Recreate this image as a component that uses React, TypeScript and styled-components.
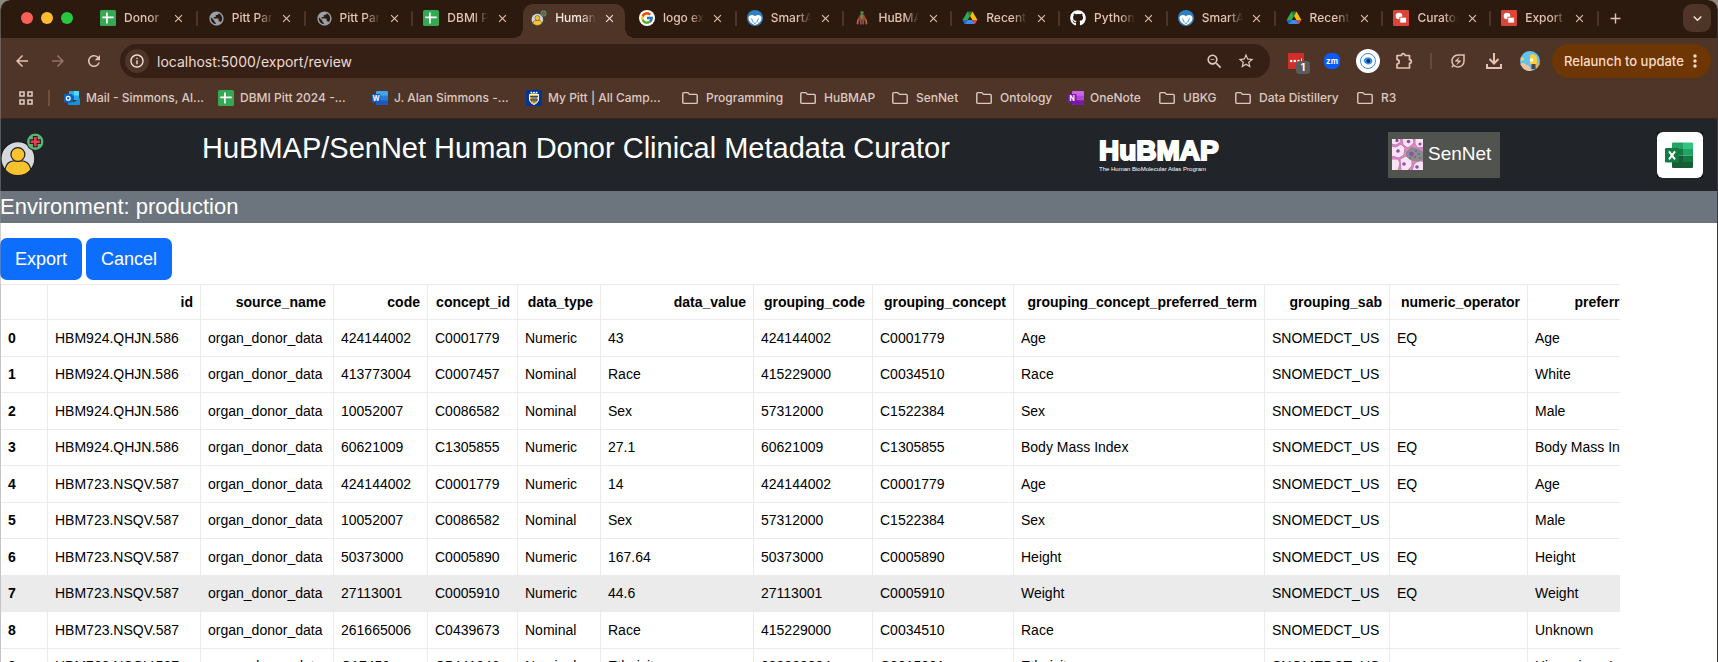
import React from "react";
import styled, { createGlobalStyle, css } from "styled-components";
import {
  MdAdd,
  MdArrowBack,
  MdArrowForward,
  MdClose,
  MdExpandMore,
  MdInfoOutline,
  MdMoreVert,
  MdOutlineEnergySavingsLeaf,
  MdPublic,
  MdRefresh,
  MdStarOutline,
  MdZoomOut,
} from "react-icons/md";
import { FaGithub } from "react-icons/fa";
import { FcGoogle } from "react-icons/fc";

const color = {
  strip: "#2d1a0f",
  bar: "#4f3428",
  field: "#362015",
  tabText: "#e3c4b2",
  barText: "#dccac1",
  bright: "#f6e6dd",
  divider: "#65493b",
  relaunch: "#6e3505",
  navbar: "#212529",
  env: "#6c757d",
  primary: "#0d6efd",
  line: "#e9ebee",
  hover: "#ebebeb",
};

const uiFont = `Inter, Roboto, sans-serif`;
const pageFont = `"Liberation Sans", Arial, sans-serif`;

const GlobalStyle = createGlobalStyle`
  *, *::before, *::after { box-sizing: border-box; }
  html { background: #8d8782; overflow: hidden; }
  body { margin: 0; font-family: ${pageFont}; }
  button { border: 0; padding: 0; background: none; color: inherit; font: inherit; cursor: pointer; }
  svg { display: block; flex: none; }
`;

/* ---------- window ---------- */

const Window = styled.div`
  position: relative;
  height: 100vh;
  overflow: hidden;
  display: flex;
  flex-direction: column;
  border-radius: 10px 10px 0 0;
  background: #fff;

  &::after {
    content: "";
    position: absolute;
    inset: 0;
    border-radius: inherit;
    border-left: 1px solid rgba(150, 150, 150, 0.45);
    border-right: 1px solid #3c3a38;
    pointer-events: none;
  }
`;

/* ---------- tab strip ---------- */

const TabStrip = styled.header`
  flex: none;
  display: flex;
  height: 38px;
  background: ${color.strip};
  font-family: ${uiFont};
`;

const Lights = styled.div`
  display: flex;
  align-items: center;
  gap: 8px;
  width: 89px;
  padding: 0 0 2px 21px;
`;

const Light = styled.span<{ $fill: string }>`
  width: 12px;
  height: 12px;
  border-radius: 50%;
  background: ${(p) => p.$fill};
`;

const Tabs = styled.nav`
  flex: 1;
  display: flex;
  min-width: 0;
`;

const Tab = styled.div<{ $active?: boolean; $divider?: boolean }>`
  position: relative;
  flex: 1 1 0;
  min-width: 0;
  display: flex;
  align-items: center;
  padding: 0 10px 2px 11px;
  color: ${(p) => (p.$active ? color.bright : color.tabText)};
  font-size: 12px;
  font-weight: 500;

  ${(p) =>
    p.$divider &&
    css`
      &::after {
        content: "";
        position: absolute;
        right: -1px;
        top: 11px;
        width: 2px;
        height: 15px;
        border-radius: 1px;
        background: ${color.bar};
      }
    `}
`;

const ActiveShape = styled.span`
  position: absolute;
  inset: 4px 3px 0;
  border-radius: 10px 10px 0 0;
  background: ${color.bar};

  &::before,
  &::after {
    content: "";
    position: absolute;
    bottom: 0;
    width: 10px;
    height: 10px;
  }
  &::before {
    right: 100%;
    background: radial-gradient(circle at 0 0, transparent 10px, ${color.bar} 10px);
  }
  &::after {
    left: 100%;
    background: radial-gradient(circle at 100% 0, transparent 10px, ${color.bar} 10px);
  }
`;

const TabIcon = styled.span`
  position: relative;
  flex: none;
  width: 16px;
  height: 16px;
  margin-right: 8px;
`;

const TabTitle = styled.a`
  position: relative;
  flex: 1;
  min-width: 0;
  margin-right: 6px;
  overflow: hidden;
  white-space: nowrap;
  color: inherit;
  text-decoration: none;
  line-height: 16px;
  mask-image: linear-gradient(to right, #000 65%, transparent);
`;

const TabClose = styled.button`
  position: relative;
  flex: none;
  display: grid;
  place-items: center;
  width: 16px;
  height: 16px;
`;

const StripEnd = styled.div`
  flex: none;
  display: flex;
  justify-content: space-between;
  width: 120px;
  padding: 4px 7px 0;
  color: ${color.tabText};
`;

const NewTab = styled.button`
  display: grid;
  place-items: center;
  width: 20px;
  height: 28px;
`;

const TabSearch = styled.button`
  display: grid;
  place-items: center;
  width: 28px;
  height: 28px;
  border-radius: 9px;
  background: ${color.bar};
  color: ${color.bright};
`;

/* ---------- toolbar ---------- */

const Toolbar = styled.div`
  flex: none;
  display: flex;
  align-items: center;
  height: 46px;
  padding: 0 7px 0 4px;
  background: ${color.bar};
  color: ${color.tabText};
  font-family: ${uiFont};
`;

const ToolButton = styled.button<{ $dim?: boolean }>`
  flex: none;
  display: grid;
  place-items: center;
  width: 36px;
  height: 34px;
  opacity: ${(p) => (p.$dim ? 0.45 : 1)};
`;

const Omnibox = styled.form`
  flex: 1;
  display: flex;
  align-items: center;
  height: 34px;
  margin: 0 8px;
  padding: 0 8px 0 5px;
  border-radius: 17px;
  background: ${color.field};
  color: ${color.barText};
`;

const SiteInfo = styled.button`
  display: grid;
  place-items: center;
  width: 24px;
  height: 24px;
  margin-right: 8px;
  border-radius: 50%;
  background: ${color.bar};
  color: ${color.bright};
`;

const Address = styled.input`
  flex: 1;
  min-width: 0;
  padding: 0;
  border: 0;
  outline: 0;
  background: none;
  color: #ecdcd3;
  font-family: ${uiFont};
  font-size: 14px;
`;

const OmniButton = styled.button`
  display: grid;
  place-items: center;
  width: 32px;
  height: 32px;
`;

const ToolDivider = styled.span`
  flex: none;
  width: 2px;
  height: 16px;
  margin: 0 8px;
  background: ${color.divider};
`;

const Relaunch = styled.button`
  flex: none;
  display: flex;
  align-items: center;
  justify-content: space-between;
  width: 159px;
  height: 34px;
  margin-left: 4px;
  padding: 0 6px 0 12px;
  border-radius: 17px;
  background: ${color.relaunch};
  color: #fadcc4;
  font-size: 13px;
  font-weight: 500;
  white-space: nowrap;
`;

/* ---------- bookmarks ---------- */

const Bookmarks = styled.nav`
  flex: none;
  display: flex;
  align-items: center;
  height: 35px;
  padding: 0 0 7px 18px;
  background: ${color.bar};
  border-bottom: 1px solid #35271f;
  color: ${color.barText};
  font-family: ${uiFont};
  font-size: 12px;
  font-weight: 500;
`;

const BookmarkDivider = styled.span`
  width: 2px;
  height: 16px;
  margin: 0 14px 0 14px;
  background: #71503a;
`;

const Bookmark = styled.a<{ $width: number; $folder?: boolean }>`
  flex: none;
  display: flex;
  align-items: center;
  gap: ${(p) => (p.$folder ? 8 : 6)}px;
  width: ${(p) => p.$width}px;
  line-height: 16px;
  color: inherit;
  text-decoration: none;
  white-space: nowrap;
`;

/* ---------- page ---------- */

const Navbar = styled.header`
  flex: none;
  display: grid;
  grid-template-columns: 202px 1fr 289px 269px 61px;
  align-items: start;
  height: 72px;
  padding-top: 13px;
  background: ${color.navbar};
  color: #fff;
`;

const Title = styled.h1`
  margin: 0;
  font-size: 29px;
  font-weight: 400;
  line-height: 32px;
  white-space: nowrap;
`;

const HubmapLogo = styled.a`
  display: flex;
  flex-direction: column;
  padding-top: 5px;
  color: #fff;
  text-decoration: none;
  white-space: nowrap;
`;

const HubmapName = styled.span`
  font-size: 28px;
  font-weight: 700;
  line-height: 28px;
  -webkit-text-stroke: 2px #fff;
`;

const HubmapTag = styled.span`
  font-size: 6px;
  line-height: 8px;
`;

const SennetLogo = styled.a`
  display: flex;
  align-items: center;
  gap: 5px;
  width: 112px;
  height: 46px;
  padding: 0 0 2px 4px;
  background: #50534e;
  color: #fff;
  font-size: 19px;
  text-decoration: none;
`;

const EnvBar = styled.p`
  flex: none;
  margin: 0;
  background: ${color.env};
  color: #fff;
  font-size: 22px;
  line-height: 32px;
`;

const Actions = styled.div`
  flex: none;
  display: flex;
  gap: 4px;
  padding: 15px 0 4px;
`;

const ActionButton = styled.button`
  height: 42px;
  padding: 0 15px;
  border-radius: 7px;
  background: ${color.primary};
  color: #fff;
  font-size: 18px;
`;

const TableArea = styled.main`
  flex: 1;
  min-height: 0;
  margin-right: 98px;
  overflow: hidden;
`;

/* The eleven rows share the table height evenly. */
const DataTable = styled.table`
  width: 1681px;
  height: 401px;
  table-layout: fixed;
  border-collapse: collapse;
  color: #000;
  font-size: 14px;
  line-height: 20px;
  white-space: nowrap;

  th,
  td {
    padding: 7px;
    border: 1px solid ${color.line};
    text-align: left;
  }
  thead th {
    text-align: right;
  }
`;

const Row = styled.tr<{ $hovered?: boolean }>`
  background: ${(p) => (p.$hovered ? color.hover : "transparent")};
`;

/* ---------- drawings ---------- */

const SheetsIcon = () => (
  <svg width="16" height="16" viewBox="0 0 16 16">
    <rect width="16" height="16" rx="1.5" fill="#34a853" />
    <path d="M6.9 2.5v11M2.3 7.3h11.4" stroke="#fff" strokeWidth="1.7" />
  </svg>
);

const GlobeIcon = () => <MdPublic size={17} color="#9aa0a8" />;

const DonorIcon = ({ size }: { size: number }) => (
  <svg width={size} height={size} viewBox="0 0 44 44">
    <circle cx="17.5" cy="26" r="16.5" fill="#d5d8dc" stroke="#15181b" strokeWidth="1" />
    <path d="M5 37c1-8 6-9 12.500-9s11.500 1 12.500 9a16.500 16.500 0 0 1-25 0z" fill="#f9c22f" stroke="#222" strokeWidth="1.200" />
    <circle cx="17.500" cy="22" r="6.800" fill="#f9c22f" stroke="#222" strokeWidth="1.200" />
    <circle cx="34.500" cy="9.500" r="8.500" fill="#5cb377" stroke="#222" strokeWidth="1" />
    <path d="M32.700 4.500h3.600v3.200h3.200v3.600h-3.200v3.200h-3.600v-3.200h-3.200V7.700h3.200z" fill="#f0384f" stroke="#222" strokeWidth="1" />
  </svg>
);

const GoogleIcon = () => (
  <svg width="16" height="16" viewBox="0 0 16 16">
    <circle cx="8" cy="8" r="8" fill="#fff" />
    <FcGoogle x="1" y="1" size={14} />
  </svg>
);

const SmartIcon = () => (
  <svg width="16" height="16" viewBox="0 0 16 16">
    <circle cx="8" cy="8" r="8" fill="#2f80c3" />
    <path d="M1.500 7.500C2 5 5.500 4.200 8 6.300c2.500-2.100 6-1.300 6.500 1.200.3 2.600-1.200 4.900-3.600 6.200L8 15.300l-2.900-1.600C2.700 12.400 1.200 10.100 1.500 7.500z" fill="#fff" />
    <path d="M4.600 8.400c.2 1.600 1.300 2 1.600 4.200M11.400 8.400c-.2 1.600-1.300 2-1.600 4.200" stroke="#2f80c3" strokeWidth=".9" fill="none" />
    <path d="M6.900 12.800h2.200L8 14.600z" fill="#2f80c3" />
  </svg>
);

const HubmapIcon = () => (
  <svg width="16" height="16" viewBox="0 0 16 16">
    <circle cx="8" cy="2.600" r="1.700" fill="#3f8d54" />
    <path d="M6 4.500h4l2 4 1 6h-1.500L10 8.500v6H8.500V10h-1v4.500H6v-6L4.500 14.500H3l1-6z" fill="#a6432c" />
    <path d="M6.500 4.500h3v4h-3z" fill="#4a7f56" />
    <path d="M4 9l-1 5M12 9l1 5M8 4v5" stroke="#c8843c" strokeWidth=".8" />
    <path d="M7 10v4M9 10v4" stroke="#4a6fa0" strokeWidth=".8" />
  </svg>
);

const DriveIcon = () => (
  <svg width="16" height="16" viewBox="0 0 16 16">
    <path d="M5.500 1.500h5L8 5.900z" fill="#188038" />
    <path d="M5.500 1.500 8 5.900 3.600 13.800 2.800 14 .6 10.100z" fill="#34a853" />
    <path d="M10.500 1.500 8 5.900l2.400 4.200h5z" fill="#fbbc04" />
    <path d="M5.600 10.100h4.800l2.600 3.900H3z" fill="#4285f4" />
    <path d="M10.400 10.100h5L13 14.100z" fill="#ea4335" />
    <path d="M.6 10.100h5L3 14.100z" fill="#1967d2" />
  </svg>
);

const ShapesIcon = () => (
  <svg width="16" height="16" viewBox="0 0 16 16">
    <rect width="16" height="16" rx="1" fill="#db4437" />
    <circle cx="6" cy="6" r="3.300" fill="#fff" />
    <rect x="6.800" y="7.200" width="6.600" height="5.800" fill="#fff" stroke="#db4437" strokeWidth=".8" />
  </svg>
);

const AppsIcon = () => (
  <svg width="16" height="16" viewBox="0 0 16 16" fill="none" stroke="currentColor" strokeWidth="1.600">
    <path d="M2 2h4v4H2zM10 2h4v4h-4zM2 10h4v4H2zM10 10h4v4h-4z" />
  </svg>
);

const FolderIcon = () => (
  <svg width="16" height="16" viewBox="0 0 16 16" fill="none" stroke="currentColor" strokeWidth="1.400">
    <path d="M.8 3.600c0-.6.4-1 1-1h4l1.700 1.800h6.700c.6 0 1 .4 1 1v7c0 .6-.4 1-1 1H1.800c-.6 0-1-.4-1-1z" />
  </svg>
);

type LetterIconProps = { letter: string; back: string; mid: string; front: string };

const LetterIcon = ({ letter, back, mid, front }: LetterIconProps) => (
  <svg width="16" height="16" viewBox="0 0 16 16">
    <rect x="4" y="1" width="12" height="14" rx="1" fill={back} />
    <path d="M4 5.700h12v4.600H4z" fill={mid} />
    <path d="M4 10.300h12V14q0 1-1 1H5q-1 0-1-1z" fill={front} />
    <rect y="4" width="8.500" height="8.500" rx="1" fill={front} />
    <text x="4.250" y="10.700" fontSize="7" fontWeight="700" fontFamily="Inter, sans-serif" fill="#fff" textAnchor="middle">
      {letter}
    </text>
  </svg>
);

const OutlookIcon = () => (
  <svg width="16" height="16" viewBox="0 0 16 16">
    <rect x="5" y="1" width="10" height="9" rx="1" fill="#28a8ea" />
    <path d="M10 1h5v4.500h-5z" fill="#50d9ff" />
    <path d="M5 5.500h5V10H5z" fill="#0364b8" />
    <path d="M4 9l6 3.200L16 8v6q0 1-1 1H5q-1 0-1-1z" fill="#1490df" />
    <rect y="4" width="8.500" height="8.500" rx="1" fill="#0f5fbd" />
    <circle cx="4.250" cy="8.200" r="1.900" fill="none" stroke="#fff" strokeWidth="1.300" />
  </svg>
);

const PittIcon = () => (
  <svg width="16" height="16" viewBox="0 0 16 16">
    <rect width="16" height="16" fill="#003594" />
    <path d="M3.500 4.500h9V9c0 3-2.300 4.500-4.500 5.500C5.800 13.500 3.500 12 3.500 9z" fill="#ffb81c" stroke="#fff" strokeWidth="1" />
    <path d="M4 6.500h8M4 10h8M6 6.500V12M8 6.500V13M10 6.500V12" stroke="#003594" strokeWidth=".8" />
    <path d="M4.500 3.500V1.700h1.500v1h1.200v-1h1.600v1H10v-1h1.500v1.800z" fill="#fff" />
  </svg>
);

const PasswordIcon = () => (
  <svg width="28" height="26" viewBox="0 0 28 26">
    <rect x="6" y="5" width="16" height="16" rx="1" fill="#d32d27" />
    <circle cx="9.200" cy="13" r="1.300" fill="#fff" />
    <circle cx="12.800" cy="13" r="1.300" fill="#fff" />
    <circle cx="16.400" cy="13" r="1.300" fill="#fff" />
    <path d="M19.500 10.500v5" stroke="#fff" />
    <rect x="14" y="13" width="14" height="13" rx="3.500" fill="#5b5b5b" />
    <text x="21" y="23" fontSize="10" fontWeight="700" fontFamily="Inter, sans-serif" fill="#fff" textAnchor="middle">
      1
    </text>
  </svg>
);

const ZoomAppIcon = () => (
  <svg width="16" height="16" viewBox="0 0 16 16">
    <rect width="16" height="16" rx="6.500" fill="#0b5cff" />
    <text x="8" y="10.600" fontSize="8" fontWeight="700" fontFamily="Inter, sans-serif" fill="#fff" textAnchor="middle">
      zm
    </text>
  </svg>
);

const EyeIcon = () => (
  <svg width="26" height="26" viewBox="0 0 26 26">
    <circle cx="13" cy="13" r="12" fill="#fff" />
    <circle cx="13" cy="13" r="7.500" fill="none" stroke="#3d8ee0" strokeWidth="1" />
    <path d="M8.500 12.500c1.500-4 7.500-4.500 9 0 0 4.500-7 6-9 0z" fill="#3a92ea" />
    <circle cx="13.300" cy="13" r="2" fill="#12325e" />
  </svg>
);

const PuzzleIcon = () => (
  <svg width="20" height="20" viewBox="0 0 20 20" fill="none" stroke="currentColor" strokeWidth="1.700" strokeLinejoin="round">
    <path d="M3 4.500h4.500a1.800 1.800 0 0 1 3.600 0h4.400v4.200a1.800 1.800 0 0 1 0 3.600v4.700H3v-4a2.200 2.200 0 0 0 0-4.400z" />
  </svg>
);

const DownloadIcon = () => (
  <svg width="18" height="18" viewBox="0 0 18 18" fill="none" stroke="currentColor" strokeWidth="2">
    <path d="M9 1v10M4.500 7 9 11.500 13.500 7M2 12v4h14v-4" />
  </svg>
);

const AvatarIcon = () => (
  <svg width="20" height="20" viewBox="0 0 20 20">
    <defs>
      <clipPath id="avatar-clip">
        <circle cx="10" cy="10" r="10" />
      </clipPath>
    </defs>
    <g clipPath="url(#avatar-clip)">
      <rect width="20" height="20" fill="#62c3ef" />
      <path d="M0 13c3-3 6 1 9 2l3 5H0z" fill="#f3c49b" />
      <path d="M10 4c3-2 7 0 7 4v6l-5 1-2-3z" fill="#fbd03b" />
      <path d="M0 6l4 1v2L1 10z" fill="#fbd03b" />
      <circle cx="11.500" cy="9" r="1.800" fill="#fff" />
      <path d="M11.500 13h4v5h-4z" fill="#54453b" />
      <path d="M16 12h4v8h-4z" fill="#d8b36a" />
    </g>
  </svg>
);

const CellsPicture = () => (
  <svg width="31" height="31" viewBox="0 0 31 31">
    <rect width="31" height="31" fill="#d98ac5" />
    <g fill="#f7e3f1" stroke="#c678b4" strokeWidth="1">
      <path d="M-1-2 8-1 9 3 4 6-1 5zM10-1h11l1 5-6 5-5-3zM23-1h9v9l-6 1-3-4zM-1 7l5 1 5-3 4 4-1 7-5 3-8-2zM-1 20l7 0 2 4-2 8h-7zM8 20l6-3 6 4 0 6-5 5H9zM22 25l5-4 5 2v9H20z" />
    </g>
    <path d="M14 13l5-5 8 2 5 3v8l-6 2-8-2-4-4z" fill="#8c8a8e" />
    <g fill="#8a4fa8">
      <circle cx="5" cy="1.500" r="1.700" />
      <circle cx="16.500" cy="2.500" r="1.800" />
      <circle cx="28" cy="5" r="1.600" />
      <circle cx="6" cy="12" r="1.800" />
      <circle cx="19.500" cy="15" r="2.200" />
      <circle cx="12" cy="25" r="1.800" />
      <circle cx="25" cy="28" r="1.800" />
    </g>
    <g fill="#4c4a50">
      <circle cx="24" cy="12" r=".7" />
      <circle cx="27" cy="15" r=".7" />
      <circle cx="23" cy="18" r=".7" />
      <circle cx="28" cy="19" r=".7" />
      <circle cx="18" cy="19" r=".7" />
    </g>
  </svg>
);

const ExcelPicture = () => (
  <svg width="46" height="46" viewBox="0 0 46 46">
    <rect width="46" height="46" fill="#0c0e10" />
    <rect width="46" height="46" rx="6" fill="#fff" />
    <path d="M16 10.500h10V17H15v-5.500q0-1 1-1z" fill="#21a366" />
    <path d="M26 10.500h9q1 0 1 1V17H26z" fill="#33c481" />
    <path d="M15 17h11v6.500H15z" fill="#107c41" />
    <path d="M26 17h10v6.500H26z" fill="#21a366" />
    <path d="M15 23.500h11V30H15z" fill="#185c37" />
    <path d="M26 23.500h10V30H26z" fill="#107c41" />
    <path d="M15 30h21v5q0 1-1 1H16q-1 0-1-1z" fill="#185c37" />
    <rect x="8" y="16" width="14" height="14.500" rx="1.300" fill="#107c41" />
    <path d="M12 19.300l6 8M18 19.300l-6 8" stroke="#fff" strokeWidth="2" />
  </svg>
);

/* ---------- data ---------- */

type TabInfo = { title: string; icon: React.ReactNode; active?: boolean; divider?: boolean };

const tabs: TabInfo[] = [
  { title: "Donor", icon: <SheetsIcon />, divider: true },
  { title: "Pitt Pan", icon: <GlobeIcon />, divider: true },
  { title: "Pitt Pan", icon: <GlobeIcon />, divider: true },
  { title: "DBMI Pitt", icon: <SheetsIcon /> },
  { title: "Human", icon: <DonorIcon size={16} />, active: true },
  { title: "logo exp", icon: <GoogleIcon />, divider: true },
  { title: "SmartAPI", icon: <SmartIcon />, divider: true },
  { title: "HuBMAP", icon: <HubmapIcon />, divider: true },
  { title: "Recent", icon: <DriveIcon />, divider: true },
  { title: "Python", icon: <FaGithub size={16} color="#fff" />, divider: true },
  { title: "SmartAPI", icon: <SmartIcon />, divider: true },
  { title: "Recent", icon: <DriveIcon />, divider: true },
  { title: "Curator", icon: <ShapesIcon />, divider: true },
  { title: "Export", icon: <ShapesIcon />, divider: true },
];

type BookmarkInfo = { label: string; width: number; icon?: React.ReactNode };

const bookmarks: BookmarkInfo[] = [
  { label: "Mail - Simmons, Al...", width: 154, icon: <OutlookIcon /> },
  { label: "DBMI Pitt 2024 -...", width: 154, icon: <SheetsIcon /> },
  { label: "J. Alan Simmons -...", width: 154, icon: <LetterIcon letter="W" back="#41a5ee" mid="#2b7cd3" front="#185abd" /> },
  { label: "My Pitt | All Camp...", width: 156, icon: <PittIcon /> },
  { label: "Programming", width: 118 },
  { label: "HuBMAP", width: 92 },
  { label: "SenNet", width: 84 },
  { label: "Ontology", width: 92 },
  { label: "OneNote", width: 91, icon: <LetterIcon letter="N" back="#ca64ea" mid="#ae4bd5" front="#7719aa" /> },
  { label: "UBKG", width: 76 },
  { label: "Data Distillery", width: 122 },
  { label: "R3", width: 60 },
];

const columns: [string, number][] = [
  ["", 47],
  ["id", 153],
  ["source_name", 133],
  ["code", 94],
  ["concept_id", 90],
  ["data_type", 83],
  ["data_value", 153],
  ["grouping_code", 119],
  ["grouping_concept", 141],
  ["grouping_concept_preferred_term", 251],
  ["grouping_sab", 125],
  ["numeric_operator", 138],
  ["preferred_term", 154],
];

const source = "organ_donor_data";
const sab = "SNOMEDCT_US";

const rows: string[][] = [
  ["HBM924.QHJN.586", source, "424144002", "C0001779", "Numeric", "43", "424144002", "C0001779", "Age", sab, "EQ", "Age"],
  ["HBM924.QHJN.586", source, "413773004", "C0007457", "Nominal", "Race", "415229000", "C0034510", "Race", sab, "", "White"],
  ["HBM924.QHJN.586", source, "10052007", "C0086582", "Nominal", "Sex", "57312000", "C1522384", "Sex", sab, "", "Male"],
  ["HBM924.QHJN.586", source, "60621009", "C1305855", "Numeric", "27.1", "60621009", "C1305855", "Body Mass Index", sab, "EQ", "Body Mass Index"],
  ["HBM723.NSQV.587", source, "424144002", "C0001779", "Numeric", "14", "424144002", "C0001779", "Age", sab, "EQ", "Age"],
  ["HBM723.NSQV.587", source, "10052007", "C0086582", "Nominal", "Sex", "57312000", "C1522384", "Sex", sab, "", "Male"],
  ["HBM723.NSQV.587", source, "50373000", "C0005890", "Numeric", "167.64", "50373000", "C0005890", "Height", sab, "EQ", "Height"],
  ["HBM723.NSQV.587", source, "27113001", "C0005910", "Numeric", "44.6", "27113001", "C0005910", "Weight", sab, "EQ", "Weight"],
  ["HBM723.NSQV.587", source, "261665006", "C0439673", "Nominal", "Race", "415229000", "C0034510", "Race", sab, "", "Unknown"],
  ["HBM723.NSQV.587", source, "C17459", "C5441846", "Nominal", "Ethnicity", "398229004", "C0015031", "Ethnicity", sab, "", "Hispanic or Latino"],
];

const hoveredRow = 7;

/* ---------- app ---------- */

export default function App() {
  return (
    <Window>
      <GlobalStyle />
      <TabStrip>
        <Lights>
          <Light $fill="#ff5f57" />
          <Light $fill="#febc2e" />
          <Light $fill="#28c840" />
        </Lights>
        <Tabs aria-label="Tabs">
          {tabs.map((tab, i) => (
            <Tab key={i} $active={tab.active} $divider={tab.divider}>
              {tab.active && <ActiveShape />}
              <TabIcon>{tab.icon}</TabIcon>
              <TabTitle href="#">{tab.title}</TabTitle>
              <TabClose aria-label={`Close ${tab.title}`}>
                <MdClose size={13} />
              </TabClose>
            </Tab>
          ))}
        </Tabs>
        <StripEnd>
          <NewTab aria-label="New tab">
            <MdAdd size={17} />
          </NewTab>
          <TabSearch aria-label="Search tabs">
            <MdExpandMore size={17} />
          </TabSearch>
        </StripEnd>
      </TabStrip>

      <Toolbar>
        <ToolButton aria-label="Back">
          <MdArrowBack size={18} />
        </ToolButton>
        <ToolButton aria-label="Forward" $dim>
          <MdArrowForward size={18} />
        </ToolButton>
        <ToolButton aria-label="Reload">
          <MdRefresh size={18} />
        </ToolButton>
        <Omnibox onSubmit={(e) => e.preventDefault()}>
          <SiteInfo type="button" aria-label="Site information">
            <MdInfoOutline size={16} />
          </SiteInfo>
          <Address aria-label="Address" defaultValue="localhost:5000/export/review" />
          <OmniButton type="button" aria-label="Zoom">
            <MdZoomOut size={19} />
          </OmniButton>
          <OmniButton type="button" aria-label="Bookmark this page">
            <MdStarOutline size={18} />
          </OmniButton>
        </Omnibox>
        <ToolButton aria-label="Password manager">
          <PasswordIcon />
        </ToolButton>
        <ToolButton aria-label="Zoom meetings">
          <ZoomAppIcon />
        </ToolButton>
        <ToolButton aria-label="Viewer extension">
          <EyeIcon />
        </ToolButton>
        <ToolButton aria-label="Extensions">
          <PuzzleIcon />
        </ToolButton>
        <ToolDivider />
        <ToolButton aria-label="Energy saver">
          <MdOutlineEnergySavingsLeaf size={18} />
        </ToolButton>
        <ToolButton aria-label="Downloads">
          <DownloadIcon />
        </ToolButton>
        <ToolButton aria-label="Profile">
          <AvatarIcon />
        </ToolButton>
        <Relaunch>
          Relaunch to update
          <MdMoreVert size={20} />
        </Relaunch>
      </Toolbar>

      <Bookmarks aria-label="Bookmarks">
        <AppsIcon />
        <BookmarkDivider />
        {bookmarks.map((b) => (
          <Bookmark key={b.label} href="#" $width={b.width} $folder={!b.icon}>
            {b.icon ?? <FolderIcon />}
            {b.label}
          </Bookmark>
        ))}
      </Bookmarks>

      <Navbar>
        <DonorIcon size={45} />
        <Title>HuBMAP/SenNet Human Donor Clinical Metadata Curator</Title>
        <HubmapLogo href="#">
          <HubmapName>HuBMAP</HubmapName>
          <HubmapTag>The Human BioMolecular Atlas Program</HubmapTag>
        </HubmapLogo>
        <SennetLogo href="#">
          <CellsPicture />
          SenNet
        </SennetLogo>
        <ExcelPicture />
      </Navbar>
      <EnvBar>Environment: production</EnvBar>

      <Actions>
        <ActionButton>Export</ActionButton>
        <ActionButton>Cancel</ActionButton>
      </Actions>

      <TableArea>
        <DataTable>
          <colgroup>
            {columns.map(([name, width]) => (
              <col key={name} width={width} />
            ))}
          </colgroup>
          <thead>
            <tr>
              {columns.map(([name]) => (
                <th key={name} scope="col">
                  {name}
                </th>
              ))}
            </tr>
          </thead>
          <tbody>
            {rows.map((cells, i) => (
              <Row key={i} $hovered={i === hoveredRow}>
                <th scope="row">{i}</th>
                {cells.map((cell, j) => (
                  <td key={j}>{cell}</td>
                ))}
              </Row>
            ))}
          </tbody>
        </DataTable>
      </TableArea>
    </Window>
  );
}
